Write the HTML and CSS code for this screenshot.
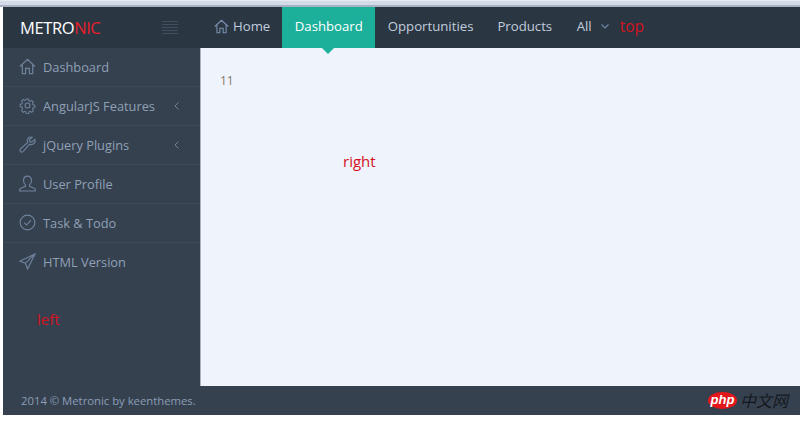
FILE: index.html
```html
<!DOCTYPE html>
<html lang="en">
<head>
<meta charset="utf-8">
<title>Metronic</title>
<link rel="stylesheet" href="styles.css">
</head>
<body>
<svg class="defs" width="0" height="0" aria-hidden="true">
  <symbol id="i-home" viewBox="0 0 18 18"><path d="M1 9 9 1.500 17 9M3.500 7.500V16.500H7V11H11V16.500H14.500V7.500" fill="none" stroke="currentColor" stroke-width="1.300"/></symbol>
</svg>
<div class="chrome"></div>
<div class="page">
  <header class="topbar">
    <div class="brand">
      <span class="logo">METRO<span class="logo-red">NIC</span></span>
      <span class="burger"><i></i><i></i><i></i><i></i><i></i></span>
    </div>
    <nav class="nav">
      <a class="nav-item nav-home"><svg class="nav-icon"><use href="#i-home"/></svg>Home</a>
      <a class="nav-item nav-active">Dashboard</a>
      <a class="nav-item">Opportunities</a>
      <a class="nav-item">Products</a>
      <a class="nav-item nav-all">All<svg class="caret" viewBox="0 0 8 5"><path d="M.5.500 4 4 7.500.500" fill="none" stroke="currentColor" stroke-width="1.200"/></svg></a>
      <span class="note note-top">top</span>
    </nav>
  </header>
  <div class="main">
    <aside class="side">
      <ul class="menu">
        <li class="row"><svg class="row-icon"><use href="#i-home"/></svg><span class="row-label">Dashboard</span></li>
        <li class="row">
          <svg class="row-icon" viewBox="0 0 18 18"><g fill="none" stroke="currentColor" stroke-width="1.200"><circle cx="9" cy="9" r="2.600"/><path d="M7.600 1.500h2.800l.4 2.100 1.300.6 1.800-1.100 2 2-1.100 1.800.6 1.300 2.100.4v2.800l-2.100.4-.6 1.300 1.100 1.800-2 2-1.800-1.100-1.300.6-.4 2.100H7.600l-.4-2.100-1.300-.6-1.800 1.100-2-2L3.200 12l-.6-1.300-2.100-.4V7.500l2.100-.4.600-1.300-1.100-1.800 2-2 1.800 1.100 1.300-.6z" transform="translate(.8 .8) scale(.91)"/></g></svg>
          <span class="row-label">AngularJS Features</span>
          <svg class="row-arrow" viewBox="0 0 5 8"><path d="M4.500.500 1 4l3.500 3.500" fill="none" stroke="currentColor"/></svg>
        </li>
        <li class="row">
          <svg class="row-icon" viewBox="0 0 18 18"><path d="M16.800 3.500 13.500 6.500 11.500 6 11 4 14 1.300C11.500.500 9 2 8.800 4.500 8.700 5.500 9 6.200 9.300 6.800L1.800 13.500C.8 14.500.8 15.800 1.600 16.500 2.400 17.300 3.700 17 4.500 16.200L11.200 8.800C12 9.200 13 9.300 14 9 16.200 8.300 17.500 6 16.800 3.500Z" fill="none" stroke="currentColor" stroke-width="1.200"/></svg>
          <span class="row-label">jQuery Plugins</span>
          <svg class="row-arrow" viewBox="0 0 5 8"><path d="M4.500.500 1 4l3.500 3.500" fill="none" stroke="currentColor"/></svg>
        </li>
        <li class="row">
          <svg class="row-icon" viewBox="0 0 18 18"><path d="M9 1.200C6.300 1.200 4.800 3.200 4.800 5.800 4.800 8 5.700 9.500 6.800 10.500V12L1.500 14.200C.9 14.500.7 15 .7 15.500V17H17.300V15.500C17.300 15 17.100 14.500 16.500 14.200L11.200 12V10.500C12.300 9.500 13.200 8 13.200 5.800 13.200 3.200 11.700 1.200 9 1.200Z" fill="none" stroke="currentColor" stroke-width="1.200"/></svg>
          <span class="row-label">User Profile</span>
        </li>
        <li class="row">
          <svg class="row-icon" viewBox="0 0 18 18"><circle cx="9" cy="9" r="7.800" fill="none" stroke="currentColor" stroke-width="1.200"/><path d="M5.500 9.200 8 11.700 12.700 6.500" fill="none" stroke="currentColor" stroke-width="1.200"/></svg>
          <span class="row-label">Task &amp; Todo</span>
        </li>
        <li class="row">
          <svg class="row-icon" viewBox="0 0 18 18"><path d="M17 1 .8 8.700 6.800 10.800 9 17ZM17 1 6.800 10.800" fill="none" stroke="currentColor" stroke-width="1.200"/></svg>
          <span class="row-label">HTML Version</span>
        </li>
      </ul>
      <p class="note note-left">left</p>
    </aside>
    <section class="content">
      <p class="count">11</p>
      <p class="note note-right">right</p>
    </section>
  </div>
  <footer class="footer">
    <span class="copy">2014 © Metronic by keenthemes.</span>
    <span class="watermark">
      <span class="wm-badge">php</span>
      <span class="wm-text">中文网</span>
    </span>
  </footer>
</div>
</body>
</html>
```

FILE: styles.css
```css
* { box-sizing: border-box; }
html, body { margin: 0; padding: 0; }
body {
  width: 800px;
  height: 422px;
  overflow: hidden;
  background: #fff;
  font-family: "Open Sans", "Noto Sans", sans-serif;
  font-size: 13.200px;
}
.defs { position: absolute; }
.chrome {
  height: 7px;
  background: #d3dbe8;
  border-top: 1px solid #e6ebf3;
  border-bottom: 2px solid #a9b2c4;
}
.page { margin-left: 3px; }

.topbar { display: flex; height: 41px; background: #2b3643; }
.brand {
  width: 197px;
  flex: none;
  display: flex;
  align-items: center;
  padding: 0 0 1px 17px;
}
.logo { font-size: 16.500px; letter-spacing: -0.400px; color: #fff; width: 142px; }
.logo-red { color: #e8202a; }
.burger { display: flex; flex-direction: column; gap: 2px; width: 16px; }
.burger i { display: block; height: 1px; background: #434f5e; }

.nav { display: flex; align-items: stretch; color: #c0cddc; }
.nav-item {
  display: flex;
  align-items: center;
  padding: 0 12px 3px;
  white-space: nowrap;
}
.nav-home { padding-left: 14px; }
.nav-active { background: #1caf9a; color: #fff; position: relative; width: 93px; justify-content: center; padding: 0 0 3px; margin-right: 0.500px; }
.nav-active::after {
  content: "";
  position: absolute;
  left: 40px;
  top: 41px;
  border: 6px solid transparent;
  border-top-color: #1caf9a;
  border-bottom: 0;
}
.nav-all { padding-right: 0; margin-left: 0.500px; }
.nav-icon { width: 15px; height: 15px; margin-right: 4px; color: #7890ae; }
.caret { width: 8px; height: 5px; margin-left: 9px; color: #6c86a5; }
.note { margin: 0; color: #d3121f; font-size: 15px; }
.note-top { margin-left: 11px; align-self: center; padding-bottom: 3px; font-size: 15.500px; }

.main { display: flex; height: 338px; }
.side { width: 197px; flex: none; background: #364150; }
.menu { list-style: none; margin: 0; padding: 0; font-size: 12.800px; }
.row {
  display: flex;
  align-items: center;
  height: 39px;
  padding: 0 0 1px 16px;
  border-bottom: 1px solid #3d4957;
  color: #8fa0b5;
}
.row:last-child { border-bottom-color: transparent; }
.row-icon { width: 17px; height: 17px; flex: none; color: #6e829b; }
.row-label { margin-left: 7px; width: 128px; white-space: nowrap; }
.row-arrow { width: 5px; height: 8px; margin-left: 3px; color: #6e829b; }
.note-left { margin: 27px 0 0 34px; }

.content { flex: 1; background: #eff3fb; border-left: 1px solid #a9b2bf; padding: 24px 0 0 19px; }
.count { margin: 0; font-size: 12px; color: #87786a; }
.note-right { margin: 62px 0 0 123px; }

.footer {
  height: 29px;
  background: #364150;
  display: flex;
  align-items: center;
  justify-content: space-between;
  padding-left: 18px;
}
.copy { font-size: 11.300px; color: #8a9db5; }
.watermark { display: flex; align-items: center; gap: 3px; margin-right: 12px; }
.wm-badge {
  width: 29px;
  height: 17px;
  border-radius: 50%;
  background: #e3161c;
  color: #fff;
  font: italic 700 13px/16px "Liberation Sans", sans-serif;
  text-align: center;
}
.wm-text {
  font: italic 16px/17px "Noto Sans CJK SC", sans-serif;
  color: #14181d;
}
```
